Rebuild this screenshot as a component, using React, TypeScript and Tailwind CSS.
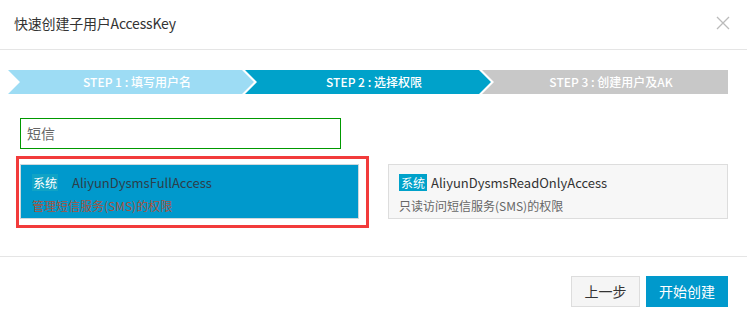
import React from "react";

const font = { fontFamily: '"Noto Sans CJK SC", "Noto Sans", sans-serif' };

function Steps() {
  const steps = [
    { label: "STEP 1 : 填写用户名", cls: "bg-[#9ddcf4]", clip: "[clip-path:polygon(0_0,234px_0,246px_50%,234px_100%,0_100%,12px_50%)]" },
    { label: "STEP 2 : 选择权限", cls: "bg-[#00a2ca]", clip: "[clip-path:polygon(0_0,234px_0,246px_50%,234px_100%,0_100%,12px_50%)]" },
    { label: "STEP 3 : 创建用户及AK", cls: "bg-[#c8c8c8]", clip: "[clip-path:polygon(0_0,100%_0,100%_100%,0_100%,12px_50%)]" },
  ];
  return (
    <div className="flex ml-[8px] mt-[20px] w-[720px] h-[24px]">
      {steps.map((s, i) => (
        <div
          key={i}
          className={`${s.cls} ${s.clip} w-[246px] h-[24px] flex items-center justify-center pl-[12px] text-white text-[12px] font-medium leading-none ${i > 0 ? "-ml-[9px]" : ""}`}
        >
          {s.label}
        </div>
      ))}
    </div>
  );
}

function Badge() {
  return (
    <span className="inline-flex items-center justify-center bg-[#00a2ca] text-white text-[12px] h-[17px] px-[2px] leading-none">
      系统
    </span>
  );
}

export default function App() {
  return (
    <div className="w-[747px] h-[328px] bg-white relative text-[#333]" style={font}>
      <div className="h-[50px] border-b border-[#e5e5e5] flex items-center justify-between pl-[14px] pr-[17px]">
        <span className="text-[14px] text-[#333] -mt-[2px] tracking-[-0.2px]">快速创建子用户AccessKey</span>
        <svg width="14" height="14" viewBox="0 0 14 14" className="-mt-[3px]">
          <path d="M1 1 L13 13 M13 1 L1 13" stroke="#bbbbbb" strokeWidth="1.3" fill="none" />
        </svg>
      </div>

      <Steps />

      <div className="ml-[20px] mt-[24px] w-[321px] h-[31px] border border-[#009900] flex items-center pl-[6px] text-[14px] text-[#666]">
        短信
      </div>

      <div className="flex gap-[29px] ml-[20px] mt-[15px] relative">
        <div className="w-[339px] h-[55px] bg-[#0099cc] border border-[#cfd8dc] pl-[11px] pt-[8px]">
          <div className="flex items-center gap-[14px] h-[19px]">
            <span className="inline-flex items-center justify-center bg-[#10a3c6] text-white text-[12px] h-[17px] px-[1px] leading-none">
              系统
            </span>
            <span className="text-[13px] text-[#2d3e4a]">AliyunDysmsFullAccess</span>
          </div>
          <div className="text-[12px] text-[#a5533f] mt-[8px] leading-none">管理短信服务(SMS)的权限</div>
        </div>
        <div className="w-[340px] h-[55px] bg-[#f7f7f7] border border-[#dddddd] pl-[10px] pt-[8px]">
          <div className="flex items-center gap-[4px] h-[19px]">
            <Badge />
            <span className="text-[13px] text-[#333]">AliyunDysmsReadOnlyAccess</span>
          </div>
          <div className="text-[12px] text-[#666] mt-[8px] leading-none">只读访问短信服务(SMS)的权限</div>
        </div>
        <div className="absolute left-[-4px] top-[-8px] w-[353px] h-[72px] border-[3px] border-[#f23b3b] pointer-events-none" />
      </div>

      <div className="mt-[37px] border-t border-[#e5e5e5] flex justify-end gap-[6px] pt-[19px] pr-[19px]">
        <button className="w-[69px] h-[31px] bg-[#f5f5f5] border border-[#dddddd] text-[14px] text-[#333]">上一步</button>
        <button className="w-[82px] h-[31px] bg-[#0099cc] text-[14px] text-white">开始创建</button>
      </div>
    </div>
  );
}
